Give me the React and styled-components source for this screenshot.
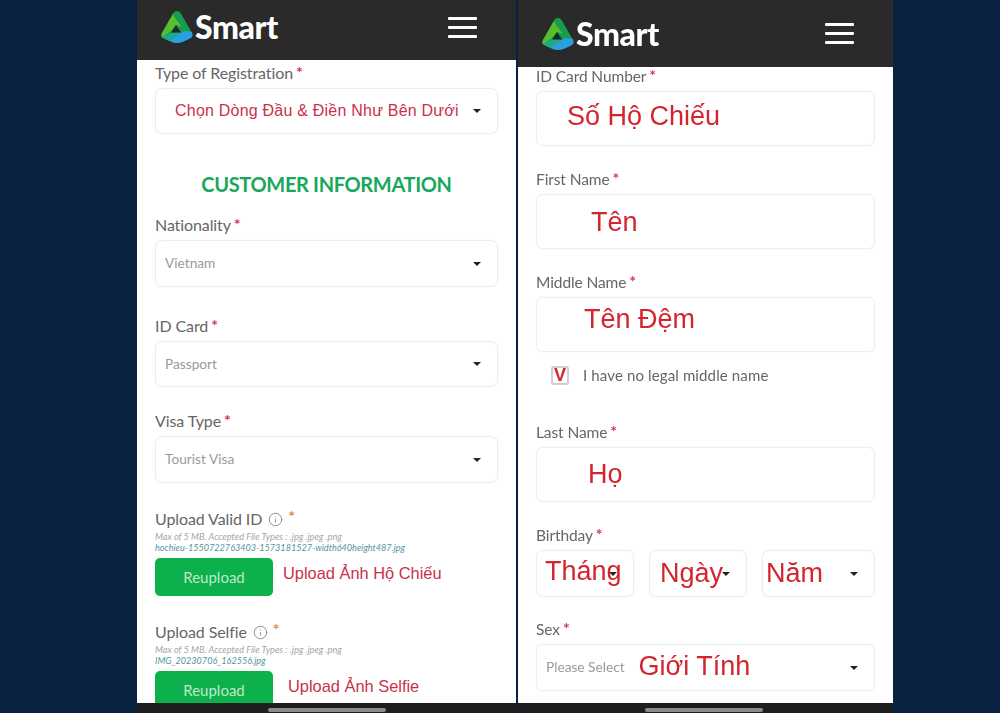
import React from 'react'
import styled, { createGlobalStyle } from 'styled-components'
import { Info } from 'lucide-react'

const GlobalStyle = createGlobalStyle`
  html, body {
    margin: 0;
    height: 713px;
    overflow: hidden;
    background: #0a2142;
    font-family: Lato, "Liberation Sans", sans-serif;
  }
`

const Page = styled.div`
  display: flex;
  gap: 2px;
  height: 713px;
  padding-left: 137px;
  filter: blur(0.5px);
`

const Phone = styled.section`
  display: flex;
  flex-direction: column;
  width: ${(p) => p.$width}px;
  height: 713px;
  background: #fff;
`

const Header = styled.header`
  flex: none;
  display: flex;
  align-items: center;
  justify-content: space-between;
  box-sizing: border-box;
  height: ${(p) => p.$height}px;
  padding: 0 39px ${(p) => p.$bottom}px 24px;
  background: #2a2a2a;
`

const Brand = styled.div`
  display: flex;
  align-items: center;
  gap: 2px;
  color: #fff;
  font-family: Lato, sans-serif;
  font-size: 32px;
  font-weight: 900;
  line-height: 36px;
  letter-spacing: -0.4px;
`

const Burger = styled.div`
  display: flex;
  flex-direction: column;
  gap: 6px;
  width: 29px;
  span {
    height: 3px;
    border-radius: 1px;
    background: #fff;
  }
`

const Content = styled.main`
  flex: 1;
  min-height: 0;
  overflow: ${(p) => (p.$clip ? 'hidden' : 'visible')};
  padding: ${(p) => p.$top}px 18px 0;
  font-size: ${(p) => p.$labelSize}px;
`

const Label = styled.div`
  margin-top: ${(p) => p.$top || 0}px;
  margin-bottom: 7px;
  display: flex;
  align-items: center;
  gap: 3px;
  height: 16px;
  color: #666;
  line-height: 16px;
  letter-spacing: -0.1px;
  svg {
    margin: 0 2px 0 3px;
    color: #8a8a8a;
  }
`

const Star = styled.span`
  color: ${(p) => (p.$orange ? '#e8893a' : '#d23a4c')};
  font-size: 16px;
  font-weight: 700;
  line-height: 12px;
  transform: translateY(${(p) => (p.$orange ? -3 : -1)}px);
`

const Select = styled.div`
  position: relative;
  flex: ${(p) => p.$flex || 'none'};
  display: flex;
  align-items: center;
  gap: 14px;
  box-sizing: border-box;
  height: ${(p) => p.$height || 47}px;
  padding-left: ${(p) => p.$indent || 9}px;
  background: #fff;
  border: 1px solid #eeeeee;
  border-radius: 7px;
  box-shadow: 0 0 2px rgba(0, 0, 0, 0.06);
`

const Caret = styled.i`
  position: absolute;
  top: 50%;
  right: ${(p) => p.$right || 16}px;
  margin-top: -2px;
  border-style: solid;
  border-width: 4px 4px 0;
  border-color: #222 transparent transparent;
`

const Placeholder = styled.span`
  color: #9a9a9a;
  font-size: 13.7px;
  transform: translateY(-1px);
`

const RedSmall = styled.span`
  color: #c9314b;
  font-family: "Liberation Sans", sans-serif;
  font-size: ${(p) => p.$size || 16}px;
  letter-spacing: ${(p) => p.$spacing || 0}px;
  white-space: nowrap;
  transform: translateY(${(p) => p.$shift || 0}px);
`

const RedBig = styled.span`
  color: #d4242e;
  font-family: "Liberation Sans", sans-serif;
  font-size: 27px;
  white-space: nowrap;
  transform: translateY(${(p) => p.$shift || 0}px);
`

const Title = styled.h2`
  margin: 35px 0 0;
  color: #17a85c;
  font-size: 20px;
  font-weight: 700;
  line-height: 30px;
  letter-spacing: -0.35px;
  text-align: center;
`

const Hint = styled.div`
  margin-top: ${(p) => p.$top || 0}px;
  height: 11px;
  color: ${(p) => p.$color || '#a5a5a5'};
  font-size: ${(p) => p.$size}px;
  font-style: italic;
  line-height: 11px;
  white-space: nowrap;
`

const UploadRow = styled.div`
  display: flex;
  align-items: center;
  gap: ${(p) => p.$gap}px;
  margin-top: 5px;
`

const Button = styled.button`
  flex: none;
  width: 118px;
  height: 38px;
  padding: 0;
  border: 0;
  border-radius: 5px;
  background: #0db14b;
  color: #bfe8cd;
  font-family: Lato, sans-serif;
  font-size: 15px;
`

const CheckRow = styled.div`
  display: flex;
  align-items: center;
  gap: 14px;
  height: 20px;
  margin: 13px 0 0 15px;
  color: #666;
  font-size: 15px;
  letter-spacing: 0.13px;
`

const Check = styled.span`
  display: flex;
  align-items: center;
  justify-content: center;
  box-sizing: border-box;
  width: 18px;
  height: 19px;
  border: 2px solid #cfcfcf;
  border-radius: 3px;
  color: #d4242e;
  font-family: "Liberation Sans", sans-serif;
  font-size: 18px;
  font-weight: 700;
  line-height: 14px;
`

const DateRow = styled.div`
  display: flex;
  gap: 15px;
`

const BottomBar = styled.footer`
  flex: none;
  display: flex;
  align-items: flex-end;
  justify-content: center;
  box-sizing: border-box;
  height: 10px;
  padding-bottom: 1px;
  background: #1e1e1e;
  span {
    width: 118px;
    height: 4px;
    margin-right: ${(p) => p.$shift || 0}px;
    background: #8c8c8c;
    border-radius: 2px;
  }
`

const Logo = () => (
  <svg width="32" height="32" viewBox="0 0 32 32">
    <path d="M16 0c1.800 0 3 1 4 2.700l11 19.300c1.300 2.400.6 4.400-1.600 5.300C25.500 29 20.500 32 16 32S6.500 29 2.600 27.300C.4 26.400-.3 24.400 1 22L12 2.700C13 1 14.200 0 16 0z" fill="#159c50" />
    <path d="M12 2.700L1 22c-.9 1.700-.8 3.200.1 4.200L10 20l5-6 6 2C17 10 13 7 12 2.700z" fill="#58bf2c" />
    <path d="M31 21c.9 2.600.1 5.200-1.600 6.300C25.500 29 20.500 32 16 32c-2.500 0-5-.9-7.300-2L20 21.500c3-1.500 7-1.500 11-.5z" fill="#2a9fe2" />
    <path d="M1.100 26.200c.4.500.9.800 1.500 1.100 2 .9 4.100 2 6.100 2.700L20 21.500H10z" fill="#1fa98c" />
    <path d="M15 14l5.200 7.500H10z" fill="#182c2a" />
  </svg>
)

const Brandmark = () => (
  <Brand>
    <Logo />
    Smart
  </Brand>
)

const Menu = () => (
  <Burger>
    <span />
    <span />
    <span />
  </Burger>
)

const Field = ({ label, top, children }) => (
  <>
    <Label $top={top}>
      {label}
      <Star>*</Star>
    </Label>
    {children}
  </>
)

const Upload = ({ label, file, note, gap, top, shift }) => (
  <>
    <Label $top={top}>
      {label}
      <Info size={15} strokeWidth={1.5} />
      <Star $orange>*</Star>
    </Label>
    <Hint $top={-3} $size={9.2}>Max of 5 MB. Accepted File Types : .jpg .jpeg .png</Hint>
    <Hint $color="#4f96a0" $size={9.1}>{file}</Hint>
    <UploadRow $gap={gap}>
      <Button>Reupload</Button>
      <RedSmall $size={16.4} $shift={shift}>{note}</RedSmall>
    </UploadRow>
  </>
)

export default function App() {
  return (
    <>
      <GlobalStyle />
      <Page>
        <Phone $width={379}>
          <Header $height={60} $bottom={6}>
            <Brandmark />
            <Menu />
          </Header>
          <Content $top={5} $labelSize={16} $clip>
            <Field label="Type of Registration">
              <Select $height={46} $indent={19}>
                <RedSmall $spacing={0.22}>Chọn Dòng Đầu &amp; Điền Như Bên Dưới</RedSmall>
                <Caret />
              </Select>
            </Field>
            <Title>CUSTOMER INFORMATION</Title>
            <Field label="Nationality" top={18}>
              <Select>
                <Placeholder>Vietnam</Placeholder>
                <Caret />
              </Select>
            </Field>
            <Field label="ID Card" top={31}>
              <Select $height={46}>
                <Placeholder>Passport</Placeholder>
                <Caret />
              </Select>
            </Field>
            <Field label="Visa Type" top={26}>
              <Select>
                <Placeholder>Tourist Visa</Placeholder>
                <Caret />
              </Select>
            </Field>
            <Upload
              label="Upload Valid ID"
              file="hochieu-1550722763403-1573181527-width640height487.jpg"
              note="Upload Ảnh Hộ Chiếu"
              gap={10}
              top={28}
              shift={-4}
            />
            <Upload
              label="Upload Selfie"
              file="IMG_20230706_162556.jpg"
              note="Upload Ảnh Selfie"
              gap={15}
              top={28}
              shift={-4}
            />
          </Content>
          <BottomBar>
            <span />
          </BottomBar>
        </Phone>
        <Phone $width={375}>
          <Header $height={67} $bottom={0}>
            <Brandmark />
            <Menu />
          </Header>
          <Content $top={1} $labelSize={15.5}>
            <Field label="ID Card Number">
              <Select $height={55} $indent={30}>
                <RedBig $shift={-2}>Số Hộ Chiếu</RedBig>
              </Select>
            </Field>
            <Field label="First Name" top={25}>
              <Select $height={55} $indent={54}>
                <RedBig $shift={1}>Tên</RedBig>
              </Select>
            </Field>
            <Field label="Middle Name" top={25}>
              <Select $height={55} $indent={47}>
                <RedBig $shift={-5}>Tên Đệm</RedBig>
              </Select>
            </Field>
            <CheckRow>
              <Check>V</Check>
              I have no legal middle name
            </CheckRow>
            <Field label="Last Name" top={39}>
              <Select $height={55} $indent={51}>
                <RedBig>Họ</RedBig>
              </Select>
            </Field>
            <Field label="Birthday" top={25}>
              <DateRow>
                <Select $flex="0 0 98px" $indent={8}>
                  <RedBig $shift={-2}>Tháng</RedBig>
                  <Caret $right={16} />
                </Select>
                <Select $flex="0 0 98px" $indent={10}>
                  <RedBig>Ngày</RedBig>
                  <Caret $right={16} />
                </Select>
                <Select $flex="0 0 113px" $indent={3}>
                  <RedBig>Năm</RedBig>
                  <Caret $right={16} />
                </Select>
              </DateRow>
            </Field>
            <Field label="Sex" top={24}>
              <Select>
                <Placeholder>Please Select</Placeholder>
                <RedBig $shift={-1}>Giới Tính</RedBig>
                <Caret $right={16} />
              </Select>
            </Field>
          </Content>
          <BottomBar $shift={3}>
            <span />
          </BottomBar>
        </Phone>
      </Page>
    </>
  )
}
